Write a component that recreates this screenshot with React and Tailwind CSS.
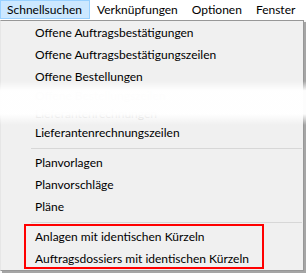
function Item({ children }) {
  return (
    <div className="h-[22px] flex items-center pl-[34px] text-[12px] text-black whitespace-nowrap">{children}</div>
  );
}

function Sep() {
  return (
    <div className="h-[8px] flex items-center">
      <div className="ml-[30px] mr-[1px] h-px flex-1 bg-[#d7d7d7]" />
    </div>
  );
}

export default function App() {
  return (
    <div className="relative w-[306px] h-[273px] overflow-hidden bg-[#f7f7f7] font-['Lato',sans-serif]">
      <div className="h-[20px] bg-white flex items-stretch text-[12px] text-black">
        <div className="w-[90px] h-[19px] bg-[#cce8ff] border border-[#99d1ff] flex items-center pl-[6px]">Schnellsuchen</div>
        <div className="flex items-center px-[7px]">Verknüpfungen</div>
        <div className="flex items-center px-[7px]">Optionen</div>
        <div className="flex items-center px-[7px]">Fenster</div>
      </div>
      <div className="w-[304px] h-[251px] bg-[#f0f0f0] border border-[#979797] border-l-[#e6e6e6] shadow-[2px_2px_0_#a5a5a5] pt-[1px]">
        <Item>Offene Auftragsbestätigungen</Item>
        <Item>Offene Auftragsbestätigungszeilen</Item>
        <Item>Offene Bestellungen</Item>
        <div className="h-[34px] flex flex-col justify-center text-[12px] text-[#c4c4c4] pl-[34px]">
          <div className="h-[18px] leading-[18px]">Offene Bestellungszeilen</div>
          <div className="h-[18px] leading-[18px]">Lieferantenrechnungen</div>
        </div>
        <Item>Lieferantenrechnungszeilen</Item>
        <Sep />
        <Item>Planvorlagen</Item>
        <Item>Planvorschläge</Item>
        <Item>Pläne</Item>
        <Sep />
        <Item>Anlagen mit identischen Kürzeln</Item>
        <Item>Auftragsdossiers mit identischen Kürzeln</Item>
      </div>
      <div className="absolute left-0 right-0 top-[81px] h-[44px] bg-[linear-gradient(to_bottom,rgba(255,255,255,0)_0%,rgba(255,255,255,0.97)_22%,rgba(255,255,255,0.97)_75%,rgba(255,255,255,0)_100%)]" />
      <div className="absolute left-[24px] top-[224px] w-[240px] h-[45px] border-2 border-[#ff0000]" />
    </div>
  );
}
